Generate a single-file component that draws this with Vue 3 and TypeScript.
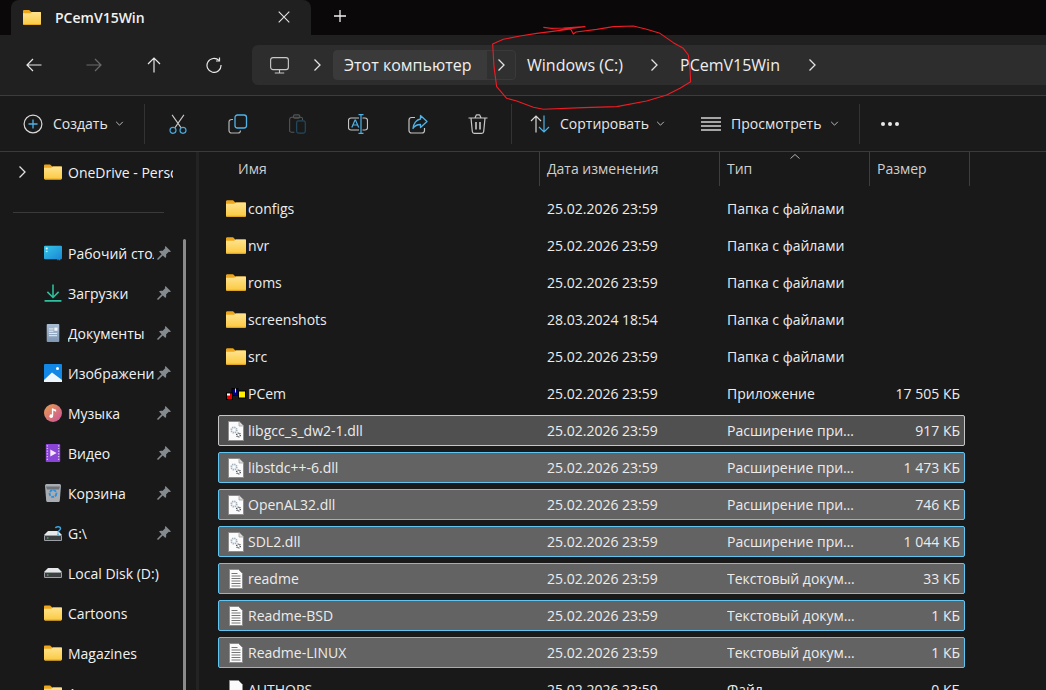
<script setup lang="ts">
interface NavItem { label: string; icon: string; pin: boolean }
interface FileRow { name: string; icon: string; date: string; type: string; size: string; state: string }

const navItems: NavItem[] = [
  { label: 'Рабочий стол', icon: 'desktop', pin: true },
  { label: 'Загрузки', icon: 'download', pin: true },
  { label: 'Документы', icon: 'docs', pin: true },
  { label: 'Изображения', icon: 'pictures', pin: true },
  { label: 'Музыка', icon: 'music', pin: true },
  { label: 'Видео', icon: 'video', pin: true },
  { label: 'Корзина', icon: 'bin', pin: true },
  { label: 'G:\\', icon: 'driveq', pin: true },
  { label: 'Local Disk (D:)', icon: 'drive', pin: false },
  { label: 'Cartoons', icon: 'folder', pin: false },
  { label: 'Magazines', icon: 'folder', pin: false },
  { label: 'Apps', icon: 'folder', pin: false },
]

const d = '25.02.2026 23:59'
const dir = 'Папка с файлами'
const ext = 'Расширение приложения'
const txt = 'Текстовый документ'
const files: FileRow[] = [
  { name: 'configs', icon: 'folder', date: d, type: dir, size: '', state: '' },
  { name: 'nvr', icon: 'folder', date: d, type: dir, size: '', state: '' },
  { name: 'roms', icon: 'folder', date: d, type: dir, size: '', state: '' },
  { name: 'screenshots', icon: 'folder', date: '28.03.2024 18:54', type: dir, size: '', state: '' },
  { name: 'src', icon: 'folder', date: d, type: dir, size: '', state: '' },
  { name: 'PCem', icon: 'pcem', date: d, type: 'Приложение', size: '17 505 КБ', state: '' },
  { name: 'libgcc_s_dw2-1.dll', icon: 'dll', date: d, type: ext, size: '917 КБ', state: 'focus' },
  { name: 'libstdc++-6.dll', icon: 'dll', date: d, type: ext, size: '1 473 КБ', state: 'sel' },
  { name: 'OpenAL32.dll', icon: 'dll', date: d, type: ext, size: '746 КБ', state: 'sel' },
  { name: 'SDL2.dll', icon: 'dll', date: d, type: ext, size: '1 044 КБ', state: 'sel' },
  { name: 'readme', icon: 'text', date: d, type: txt, size: '33 КБ', state: 'sel' },
  { name: 'Readme-BSD', icon: 'text', date: d, type: txt, size: '1 КБ', state: 'sel' },
  { name: 'Readme-LINUX', icon: 'text', date: d, type: txt, size: '1 КБ', state: 'sel' },
  { name: 'AUTHORS', icon: 'blank', date: d, type: 'Файл', size: '0 КБ', state: '' },
]
</script>

<template>
  <div class="app">
    <svg class="defs" width="0" height="0" aria-hidden="true">
      <defs>
        <linearGradient id="fold" x1="0" y1="0" x2="0" y2="1">
          <stop offset="0" stop-color="#ffe38f" />
          <stop offset="1" stop-color="#fbc940" />
        </linearGradient>
        <linearGradient id="desk" x1="0" y1="0" x2="1" y2="1">
          <stop offset="0" stop-color="#35c5e6" />
          <stop offset="1" stop-color="#1a86d6" />
        </linearGradient>
        <linearGradient id="mus" x1="0" y1="0" x2="1" y2="1">
          <stop offset="0" stop-color="#e9a04e" />
          <stop offset="1" stop-color="#c9509c" />
        </linearGradient>
        <linearGradient id="doc" x1="0" y1="0" x2="0" y2="1">
          <stop offset="0" stop-color="#a9bdd3" />
          <stop offset="1" stop-color="#7f97b3" />
        </linearGradient>
      </defs>
      <symbol id="folder" viewBox="0 0 18 15">
        <path d="M0 1.2C0 .5.5 0 1.2 0h4.4c.4 0 .7.1 1 .4L8.4 2H18v3H0z" fill="#eda51c" />
        <path d="M0 3.2h7.2L9 2h7.8c.7 0 1.2.5 1.2 1.2v10.6c0 .7-.5 1.2-1.2 1.2H1.2C.5 15 0 14.500 0 13.800z" fill="url(#fold)" />
        <path d="M0 14h18v-.2c0 .7-.5 1.200-1.200 1.200H1.200C.5 15 0 14.500 0 13.800z" fill="#e5a825" />
      </symbol>
      <symbol id="desktop" viewBox="0 0 20 16">
        <rect width="20" height="15" rx="1.200" fill="url(#desk)" />
        <rect x="2" y="2" width="2" height="2" fill="#e8fbff" />
        <rect x="2" y="5.500" width="2" height="1.500" fill="#bdeefa" />
        <rect x="15" y="15" width="1" height="1" fill="#9bd" />
        <rect x="17" y="15" width="1" height="1" fill="#9bd" />
      </symbol>
      <symbol id="download" viewBox="0 0 16 16">
        <path d="M8 .5v11M3 7l5 5 5-5" fill="none" stroke="#2cc09c" stroke-width="1.400" />
        <path d="M.5 15h15" stroke="#2cc09c" stroke-width="1.600" />
      </symbol>
      <symbol id="docs" viewBox="0 0 14 20">
        <rect width="14" height="20" rx="1" fill="url(#doc)" />
        <path d="M2.500 5.500h5M2.500 8h5M2.500 10.500h9M2.500 13h9" stroke="#f2f6fa" stroke-width="1" />
        <rect x="8.500" y="4" width="3.500" height="3.500" fill="#f2f6fa" />
      </symbol>
      <symbol id="pictures" viewBox="0 0 18 18">
        <rect width="18" height="18" rx="1" fill="#1287e6" />
        <circle cx="13.500" cy="4.500" r="1.500" fill="#fff" />
        <path d="M0 16l8-7.500 10 7.500v2H0z" fill="#eef6fd" />
      </symbol>
      <symbol id="music" viewBox="0 0 20 20">
        <circle cx="10" cy="10" r="10" fill="url(#mus)" />
        <path d="M9.500 5v8" stroke="#fff" stroke-width="1.500" />
        <path d="M9.500 5l4 1.500v2l-4-1.500z" fill="#fff" />
        <circle cx="8" cy="13.500" r="2" fill="#fff" />
      </symbol>
      <symbol id="video" viewBox="0 0 16 20">
        <rect width="16" height="20" rx="1" fill="#8a45d6" />
        <path d="M5 6l7 4-7 4z" fill="#f4eafc" />
        <path d="M1 2h1.500M1 5h1.500M1 8h1.500M1 11h1.500M1 14h1.500M1 17h1.500M13.500 2H15M13.500 5H15M13.500 8H15M13.500 11H15M13.500 14H15M13.500 17H15" stroke="#d9bdf5" stroke-width="1.300" />
      </symbol>
      <symbol id="bin" viewBox="0 0 16 18">
        <path d="M0 1.500C0 .5 1 0 2 0h12c1 0 2 .5 2 1.500L14.800 16.500c-.1 1-.8 1.500-1.800 1.500H3c-1 0-1.700-.5-1.800-1.500z" fill="#a7adb3" />
        <path d="M1 2.500h14l-1 3H2z" fill="#6f7479" />
        <circle cx="8" cy="9.500" r="3.400" fill="none" stroke="#2a8fdc" stroke-width="1.800" stroke-dasharray="3 1" />
      </symbol>
      <symbol id="drive" viewBox="0 0 18 10">
        <path d="M4 0h10l4 4H0z" fill="#e5e7e9" />
        <rect y="4" width="18" height="6" rx="1" fill="#9b9fa3" />
        <rect x="1" y="5" width="16" height="4" fill="#3b3f42" />
        <rect x="3" y="6.500" width="1.500" height="1" fill="#4fd35c" />
      </symbol>
      <symbol id="driveq" viewBox="0 0 18 16">
        <path d="M4 6h10l4 4H0z" fill="#e5e7e9" />
        <rect y="10" width="18" height="6" rx="1" fill="#9b9fa3" />
        <rect x="1" y="11" width="16" height="4" fill="#3b3f42" />
        <rect x="3" y="12.500" width="1.500" height="1" fill="#4fd35c" />
        <path d="M11.500 3.200C11.800 1.500 16.500 1 16.500 3.600c0 2-2.500 1.800-2.500 3.900M14 8.500v1.500" fill="none" stroke="#3da6e6" stroke-width="1.500" />
      </symbol>
      <symbol id="pcem" viewBox="0 0 20 12">
        <rect x="5.500" y="0" width="7" height="8" fill="#000" />
        <rect x="6.500" y="1" width="5" height="6" fill="#00007f" />
        <rect x="9" y=".5" width="1" height="4" fill="#ddd" />
        <rect x="0" y="4.500" width="7" height="8" fill="#000" />
        <rect x="1" y="5.500" width="5" height="5.500" fill="#e80000" />
        <rect x="1" y="5.500" width="3" height="2" fill="#fff" />
        <rect x="12" y="2.500" width="8" height="8" fill="#000" />
        <rect x="13" y="3.500" width="6" height="6" fill="#ffee00" />
      </symbol>
      <symbol id="dll" viewBox="0 0 16 20">
        <path d="M.5.500h10.500L15.500 5v14.500H.5z" fill="#fbfbfb" stroke="#8d8d8d" />
        <path d="M11 .5V5h4.500" fill="#ddd" stroke="#999" stroke-width=".7" />
        <circle cx="6" cy="9" r="2.700" fill="none" stroke="#9fb0bd" stroke-width="1.800" stroke-dasharray="1.300 .8" />
        <circle cx="10.500" cy="14" r="1.800" fill="none" stroke="#4a4f55" stroke-width="1.500" stroke-dasharray="1 .7" />
      </symbol>
      <symbol id="text" viewBox="0 0 14 20">
        <path d="M.5.500h9L13.500 4.500v15H.5z" fill="#fbfbfb" stroke="#8d8d8d" />
        <path d="M2.500 4.500h6M2.500 7h9M2.500 9.500h9M2.500 12h9M2.500 14.500h9M2.500 17h9" stroke="#777" stroke-width="1" />
      </symbol>
      <symbol id="blank" viewBox="0 0 14 20">
        <path d="M.5.500h9L13.500 4.500v15H.5z" fill="#fbfbfb" stroke="#8d8d8d" />
      </symbol>
      <symbol id="pin" viewBox="0 0 14 14">
        <path d="M8.500 0L14 5.500l-1.200.6-1-.3L9 8.600c.5 1.500.2 2.500-.6 3.400L5.800 9.400 1 14l-1-1 4.600-4.800L2 5.600c.9-.8 1.900-1.100 3.400-.6l2.800-2.800-.3-1z" fill="#838a90" />
      </symbol>
    </svg>

    <header class="titlebar">
      <div class="tab">
        <svg class="tab-folder"><use href="#folder" /></svg>
        <span class="tab-title">PCemV15Win</span>
        <svg class="tab-close" viewBox="0 0 12 12"><path d="M.7.700l10.600 10.600M11.300.700L.7 11.300" stroke="#e4e4e4" stroke-width="1.100" fill="none" /></svg>
      </div>
      <svg class="tab-plus" viewBox="0 0 12 12"><path d="M6 0v12M0 6h12" stroke="#efefef" stroke-width="1.300" fill="none" /></svg>
    </header>

    <nav class="navbar">
      <button class="nav-btn">
        <svg viewBox="0 0 16 16"><path d="M15.500 8H1M7 2L1 8l6 6" fill="none" stroke="#e8e8e8" stroke-width="1.200" /></svg>
      </button>
      <button class="nav-btn">
        <svg viewBox="0 0 16 16"><path d="M.5 8H15M9 2l6 6-6 6" fill="none" stroke="#6a6a6a" stroke-width="1.200" /></svg>
      </button>
      <button class="nav-btn">
        <svg viewBox="0 0 16 16"><path d="M8 15.500V1M2 7l6-6 6 6" fill="none" stroke="#e8e8e8" stroke-width="1.200" /></svg>
      </button>
      <button class="nav-btn">
        <svg viewBox="0 0 16 16"><path d="M13 3.500A7 7 0 1 0 15 8" fill="none" stroke="#e8e8e8" stroke-width="1.200" /><path d="M13.500.5v3.500H10" fill="none" stroke="#e8e8e8" stroke-width="1.200" /></svg>
      </button>
      <div class="address">
        <svg class="pc" viewBox="0 0 20 18"><rect x=".6" y=".6" width="18.800" height="12.800" rx="2.500" fill="none" stroke="#c9c9c9" stroke-width="1.200" /><path d="M10 13.500V17M5 17h10" stroke="#c9c9c9" stroke-width="1.200" fill="none" /></svg>
        <svg class="chev first"><use href="#crumbchev" /></svg>
        <div class="crumb-box">
          <span class="crumb-text">Этот компьютер</span>
          <span class="crumb-arrow"><svg class="chev"><use href="#crumbchev" /></svg></span>
        </div>
        <span class="crumb win">Windows (C:)</span>
        <svg class="chev"><use href="#crumbchev" /></svg>
        <span class="crumb pcem">PCemV15Win</span>
        <svg class="chev"><use href="#crumbchev" /></svg>
      </div>
      <svg class="defs" width="0" height="0"><symbol id="crumbchev" viewBox="0 0 10 14"><path d="M2.500 1.500L8 7l-5.500 5.500" fill="none" stroke="#e2e2e2" stroke-width="1.300" /></symbol></svg>
    </nav>

    <section class="toolbar">
      <div class="tb-drop new">
        <svg class="tb-ic" viewBox="0 0 20 20"><circle cx="10" cy="10" r="8.900" fill="none" stroke="#d8d8d8" stroke-width="1.200" /><path d="M10 5.500v9M5.500 10h9" stroke="#4fb3e8" stroke-width="1.300" fill="none" /></svg>
        <span>Создать</span>
        <svg class="drop" viewBox="0 0 10 6"><path d="M1 1l4 4 4-4" fill="none" stroke="#c8c8c8" stroke-width="1.100" /></svg>
      </div>
      <i class="sep"></i>
      <button class="tb-btn">
        <svg viewBox="0 0 20 22"><path d="M3.500 1l9.800 14M16.500 1L6.700 15" stroke="#c9c9c9" stroke-width="1.200" fill="none" /><circle cx="4.500" cy="18" r="3.300" fill="none" stroke="#4aa9dc" stroke-width="1.300" /><circle cx="15.500" cy="18" r="3.300" fill="none" stroke="#4aa9dc" stroke-width="1.300" /></svg>
      </button>
      <button class="tb-btn">
        <svg viewBox="0 0 20 20"><path d="M5 5.500H3.500A2.500 2.500 0 0 0 1 8v8.500A2.500 2.500 0 0 0 3.500 19H10a2.500 2.500 0 0 0 2.500-2.500" fill="none" stroke="#b4b4b4" stroke-width="1.200" /><rect x="7" y="1" width="11.500" height="13" rx="2.500" fill="none" stroke="#4fb3e8" stroke-width="1.300" /></svg>
      </button>
      <button class="tb-btn">
        <svg viewBox="0 0 20 22"><path d="M8 3.500H3A2.500 2.500 0 0 0 .8 6v13A2.500 2.500 0 0 0 3 20h3M8 3.500h5a2 2 0 0 1 2 2V7" fill="none" stroke="#555" stroke-width="1.200" /><rect x="5" y="1" width="7" height="3.500" rx="1.500" fill="none" stroke="#555" stroke-width="1.200" /><rect x="8.500" y="7.500" width="9.500" height="13.500" rx="2" fill="none" stroke="#234a60" stroke-width="1.300" /></svg>
      </button>
      <button class="tb-btn">
        <svg viewBox="0 0 20 20"><path d="M11 4H3a2.500 2.500 0 0 0-2.500 2.500v7A2.500 2.500 0 0 0 3 16h8M14.500 4H17a2.500 2.500 0 0 1 2.500 2.500v7A2.500 2.500 0 0 1 17 16h-2.500" fill="none" stroke="#c4c4c4" stroke-width="1.200" /><path d="M3.800 13.500L7 6h.5l3.200 7.500M5 11h5" fill="none" stroke="#4fb3e8" stroke-width="1.200" /><path d="M10.500 .6h5M10.500 19.400h5M13 .6v18.800" fill="none" stroke="#4fb3e8" stroke-width="1.200" /></svg>
      </button>
      <button class="tb-btn">
        <svg viewBox="0 0 20 20"><path d="M7 3.500H3.500A2.500 2.500 0 0 0 1 6v10.500A2.500 2.500 0 0 0 3.500 19H14a2.500 2.500 0 0 0 2.500-2.500V14" fill="none" stroke="#c4c4c4" stroke-width="1.200" /><path d="M12.500 1.500L19 7.500l-6.500 6V10.500C9 10.500 6.500 12 5 14.500 5.300 9.500 8.500 5.500 12.500 5z" fill="none" stroke="#4fb3e8" stroke-width="1.300" stroke-linejoin="round" /></svg>
      </button>
      <button class="tb-btn">
        <svg viewBox="0 0 20 20"><path d="M.5 4h19M7 4l1-2.500a1 1 0 0 1 1-.7h2a1 1 0 0 1 1 .7L13 4M3 4l1.300 13.500A2 2 0 0 0 6.300 19.300h7.400a2 2 0 0 0 2-1.800L17 4" fill="none" stroke="#c8c8c8" stroke-width="1.200" /><path d="M8 8v7.500M12 8v7.500" stroke="#c8c8c8" stroke-width="1.600" fill="none" /></svg>
      </button>
      <i class="sep"></i>
      <div class="tb-drop sort">
        <svg class="tb-ic" viewBox="0 0 20 20"><path d="M6 18.500V2M1 7l5-5 5 5" fill="none" stroke="#d8d8d8" stroke-width="1.200" /><path d="M14 1.500V18M9 13l5 5 5-5" fill="none" stroke="#4fb3e8" stroke-width="1.200" /></svg>
        <span>Сортировать</span>
        <svg class="drop" viewBox="0 0 10 6"><path d="M1 1l4 4 4-4" fill="none" stroke="#c8c8c8" stroke-width="1.100" /></svg>
      </div>
      <div class="tb-drop view">
        <svg class="tb-ic" viewBox="0 0 20 14"><path d="M0 1h20M0 5h20M0 9h20M0 13h20" stroke="#d4d4d4" stroke-width="1.300" fill="none" /></svg>
        <span>Просмотреть</span>
        <svg class="drop" viewBox="0 0 10 6"><path d="M1 1l4 4 4-4" fill="none" stroke="#c8c8c8" stroke-width="1.100" /></svg>
      </div>
      <i class="sep"></i>
      <div class="dots"><b></b><b></b><b></b></div>
    </section>

    <main class="main">
      <aside class="sidebar">
        <div class="tree">
          <div class="side-row od">
            <svg class="tree-chev"><use href="#crumbchev" /></svg>
            <svg class="side-ic"><use href="#folder" /></svg>
            <span class="side-label">OneDrive - Personal</span>
          </div>
          <div class="side-sep"><i></i></div>
          <div v-for="n in navItems" :key="n.label" class="side-row">
            <svg class="side-ic"><use :href="'#' + n.icon" /></svg>
            <span class="side-label">{{ n.label }}</span>
            <svg v-if="n.pin" class="pin"><use href="#pin" /></svg>
          </div>
        </div>
        <div class="thumb"></div>
      </aside>
      <div class="split"></div>
      <section class="list">
        <div class="head">
          <div class="hc name">Имя</div>
          <div class="hc date">Дата изменения</div>
          <div class="hc type">Тип
            <svg class="caret" viewBox="0 0 10 5"><path d="M.5 4.500L5 .5l4.500 4" fill="none" stroke="#b0b0b0" stroke-width="1" /></svg>
          </div>
          <div class="hc size">Размер</div>
        </div>
        <div class="rows">
          <div v-for="f in files" :key="f.name" class="row" :class="f.state">
            <span class="cell-ic"><svg :class="'ic-' + f.icon"><use :href="'#' + f.icon" /></svg></span>
            <span class="c-name">{{ f.name }}</span>
            <span class="c-date">{{ f.date }}</span>
            <span class="c-type">{{ f.type }}</span>
            <span class="c-size">{{ f.size }}</span>
          </div>
        </div>
      </section>
    </main>

    <svg class="scribble" width="1046" height="690" viewBox="0 0 1046 690">
      <path transform="translate(480 20) scale(.3333)" d="M190 22l25 3 35-1 65-4-65 8-15 3M235 32l37-5 8 15 8-6 62-8 50-8 60-2 40 10 40 12 40 28 30 17 15 20 5 40 2 40-32 20-40 20-60 18-90 17-100 3-120 5-30-6-50-19-30-8-30-35-8-60-4-68 32-14 50-10 50-8z" fill="none" stroke="#ee1c25" stroke-width="3.300" stroke-linejoin="round" />
    </svg>
  </div>
</template>

<style>
html, body { margin: 0; background: #191919; }
</style>

<style scoped>
.app {
  position: relative;
  width: 1046px;
  height: 690px;
  overflow: hidden;
  display: flex;
  flex-direction: column;
  background: #191919;
  color: #e8e8e8;
  font-family: "Open Sans", "Noto Sans", sans-serif;
  font-size: 14px;
}
.defs { position: absolute; }
button { all: unset; display: flex; align-items: center; justify-content: center; }

.titlebar { height: 35px; flex: none; background: #0a0808; display: flex; padding-left: 11px; }
.tab {
  width: 300px;
  height: 35px;
  background: #202020;
  border-radius: 8px 8px 0 0;
  display: flex;
  align-items: center;
}
.tab-folder { width: 18px; height: 15px; margin-left: 12px; }
.tab-title { margin-left: 14px; width: 223px; font-size: 14px; font-weight: 600; color: #f2f2f2; }
.tab-close { width: 12px; height: 12px; margin-top: -1px; }
.tab-plus { width: 12px; height: 12px; margin: 10px 0 0 23px; }

.navbar { height: 60px; flex: none; background: #202020; display: flex; align-items: center; padding-left: 4px; }
.nav-btn { width: 60px; height: 40px; }
.nav-btn svg { width: 16px; height: 16px; }
.address {
  margin-left: 8px;
  flex: 1;
  height: 40px;
  background: #2d2d2d;
  border-radius: 6px 0 0 6px;
  display: flex;
  align-items: center;
  padding-left: 18px;
  font-size: 16px;
  color: #efefef;
}
.pc { width: 19px; height: 17px; }
.chev { width: 10px; height: 14px; flex: none; }
.chev.first { margin: 0 11px 0 23px; }
.crumb-box {
  width: 183px;
  height: 30px;
  display: flex;
  border-radius: 4px;
  overflow: hidden;
  box-sizing: border-box;
}
.crumb-text { width: 154px; background: #3a3a3a; padding-left: 11px; line-height: 30px; box-sizing: border-box; border-radius: 4px 0 0 4px; }
.crumb-arrow {
  width: 29px;
  box-sizing: border-box;
  background: #303030;
  border: 1px solid #3a3a3a;
  border-left: none;
  border-radius: 0 4px 4px 0;
  display: flex;
  align-items: center;
  justify-content: center;
}
.crumb { white-space: nowrap; }
.win { width: 122px; margin-left: 11px; }
.pcem { width: 127px; margin-left: 21px; }

.toolbar {
  height: 57px;
  flex: none;
  box-sizing: border-box;
  border-top: 1px solid #3c3c3c;
  border-bottom: 1px solid #3a3a3a;
  margin-bottom: 0;
  display: flex;
  align-items: center;
  background: #1a1a1a;
  font-size: 14px;
  color: #e6e6e6;
}
.tb-drop { display: flex; align-items: center; box-sizing: border-box; }
.tb-ic { width: 20px; height: 20px; margin-right: 10px; flex: none; }
.drop { width: 9px; height: 5px; margin-left: auto; flex: none; }
.new { width: 144px; padding: 0 20px 0 23px; }
.sort { width: 171px; padding: 0 18px; }
.view { width: 176px; padding: 0 20px 0 18px; }
.view .tb-ic { height: 14px; }
.sep { width: 1px; height: 40px; background: #333; flex: none; }
.tb-btn { width: 60px; height: 40px; }
.tb-btn:first-of-type { margin-left: 3px; }
.tb-btn svg { width: 20px; height: 20px; }
.tb-btn + .sep { margin-left: 3px; }
.dots { display: flex; gap: 3px; margin-left: 21px; }
.dots b { width: 4px; height: 4px; border-radius: 50%; background: #e8e8e8; }

.main { flex: 1; min-height: 0; display: flex; }
.sidebar { width: 196px; flex: none; display: flex; }
.tree { width: 183px; flex: none; }
.side-row {
  height: 40px;
  box-sizing: border-box;
  padding: 0 10px 0 44px;
  display: flex;
  align-items: center;
  color: #f2f2f2;
}
.side-row.od { position: relative; }
.tree-chev { position: absolute; left: 17px; top: 13px; width: 10px; height: 14px; }
.side-ic { width: 18px; height: 18px; flex: none; margin-right: 6px; }
.side-label { flex: 1; min-width: 0; white-space: nowrap; overflow: hidden; }
.pin { width: 14px; height: 14px; flex: none; margin-left: 3px; margin-right: 2px; }
.side-sep { height: 41px; padding-left: 13px; display: flex; align-items: center; }
.side-sep i { width: 151px; height: 1px; background: #3a3a3a; }
.thumb { width: 3px; margin-top: 87px; background: #8a8a8a; border-radius: 2px 2px 0 0; }

.split { width: 3px; flex: none; background: #232323; }
.list { flex: 1; min-width: 0; }
.head { height: 34px; display: flex; color: #cfcfcf; }
.hc { box-sizing: border-box; padding-left: 7px; line-height: 34px; border-right: 1px solid #3e3e3e; flex: none; position: relative; }
.hc.name { width: 341px; padding-left: 39px; }
.hc.date { width: 180px; }
.hc.type { width: 150px; }
.hc.size { width: 100px; }
.caret { position: absolute; left: 70px; top: 2px; width: 10px; height: 5px; }

.rows { padding: 7px 0 0 19px; display: flex; flex-direction: column; gap: 6px; }
.row {
  width: 747px;
  height: 31px;
  box-sizing: border-box;
  flex: none;
  border: 1px solid transparent;
  border-radius: 2px;
  display: flex;
  align-items: center;
  white-space: nowrap;
  color: #ececec;
}
.row.sel { background: #636363; border-color: #60c5f1; }
.row.focus { background: #505050; border-color: #c6c6c6; }
.cell-ic { width: 29px; padding-left: 4px; box-sizing: border-box; flex: none; display: flex; align-items: center; justify-content: center; }
.cell-ic svg { width: 20px; height: 17px; }
.cell-ic .ic-dll, .cell-ic .ic-text, .cell-ic .ic-blank { width: 16px; height: 20px; }
.cell-ic .ic-pcem { width: 20px; height: 12px; }
.c-name { width: 299px; flex: none; }
.c-date { width: 180px; flex: none; }
.c-type { width: 128px; flex: none; overflow: hidden; text-overflow: ellipsis; }
.c-size { width: 105px; flex: none; text-align: right; }

.scribble { position: absolute; left: 0; top: 0; pointer-events: none; }
</style>
